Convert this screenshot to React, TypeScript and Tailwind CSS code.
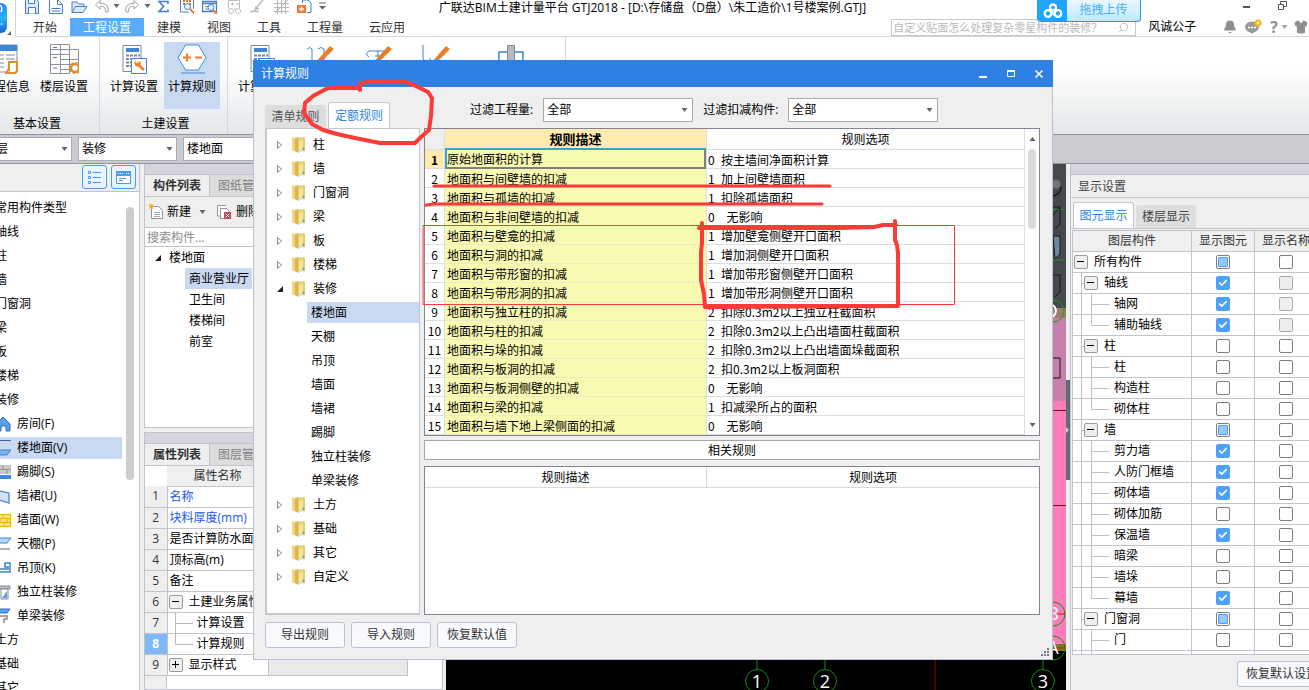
import React from 'react';
import { Bell, Check, Search, Shirt } from 'lucide-react';

const tabs = ['开始', '工程设置', '建模', '视图', '工具', '工程量', '云应用'];

const componentTypes = ['常用构件类型', '轴线', '柱', '墙', '门窗洞', '梁', '板', '楼梯', '装修'];

const finishes = [
  { name: '房间(F)', icon: 'room' },
  { name: '楼地面(V)', icon: 'floor' },
  { name: '踢脚(S)', icon: 'skirting' },
  { name: '墙裙(U)', icon: 'dado' },
  { name: '墙面(W)', icon: 'wall' },
  { name: '天棚(P)', icon: 'ceiling' },
  { name: '吊顶(K)', icon: 'suspended' },
  { name: '独立柱装修', icon: 'column' },
  { name: '单梁装修', icon: 'beam' },
];

const rules: [string, string, string][] = [
  ['原始地面积的计算', '0', '按主墙间净面积计算'],
  ['地面积与间壁墙的扣减', '1', '加上间壁墙面积'],
  ['地面积与孤墙的扣减', '1', '扣除孤墙面积'],
  ['地面积与非间壁墙的扣减', '0', '  无影响'],
  ['地面积与壁龛的扣减', '1', '增加壁龛侧壁开口面积'],
  ['地面积与洞的扣减', '1', '增加洞侧壁开口面积'],
  ['地面积与带形窗的扣减', '1', '增加带形窗侧壁开口面积'],
  ['地面积与带形洞的扣减', '1', '增加带形洞侧壁开口面积'],
  ['地面积与独立柱的扣减', '2', '扣除0.3m2以上独立柱截面积'],
  ['地面积与柱的扣减', '2', '扣除0.3m2以上凸出墙面柱截面积'],
  ['地面积与垛的扣减', '2', '扣除0.3m2以上凸出墙面垛截面积'],
  ['地面积与板洞的扣减', '2', '扣0.3m2以上板洞面积'],
  ['地面积与板洞侧壁的扣减', '0', '  无影响'],
  ['地面积与梁的扣减', '1', '扣减梁所占的面积'],
  ['地面积与墙下地上梁侧面的扣减', '0', '  无影响'],
];

const ruleTree = ['柱', '墙', '门窗洞', '梁', '板', '楼梯', '装修'];
const ruleChildren = ['楼地面', '天棚', '吊顶', '墙面', '墙裙', '踢脚', '独立柱装修', '单梁装修'];
const ruleTreeEnd = ['土方', '基础', '其它', '自定义'];

type CheckState = 'on' | 'off' | 'some' | 'disabled';

interface Layer {
  name: string;
  level: 0 | 1 | 2;
  show: CheckState;
  label: CheckState;
  last?: boolean;
}

const layers: Layer[] = [
  { name: '所有构件', level: 0, show: 'some', label: 'off' },
  { name: '轴线', level: 1, show: 'on', label: 'disabled' },
  { name: '轴网', level: 2, show: 'on', label: 'disabled' },
  { name: '辅助轴线', level: 2, show: 'on', label: 'disabled', last: true },
  { name: '柱', level: 1, show: 'off', label: 'off' },
  { name: '柱', level: 2, show: 'off', label: 'off' },
  { name: '构造柱', level: 2, show: 'off', label: 'off' },
  { name: '砌体柱', level: 2, show: 'off', label: 'off', last: true },
  { name: '墙', level: 1, show: 'some', label: 'off' },
  { name: '剪力墙', level: 2, show: 'on', label: 'off' },
  { name: '人防门框墙', level: 2, show: 'on', label: 'off' },
  { name: '砌体墙', level: 2, show: 'on', label: 'off' },
  { name: '砌体加筋', level: 2, show: 'off', label: 'off' },
  { name: '保温墙', level: 2, show: 'on', label: 'off' },
  { name: '暗梁', level: 2, show: 'off', label: 'off' },
  { name: '墙垛', level: 2, show: 'off', label: 'off' },
  { name: '幕墙', level: 2, show: 'on', label: 'off', last: true },
  { name: '门窗洞', level: 1, show: 'some', label: 'off' },
  { name: '门', level: 2, show: 'off', label: 'off' },
];

const Caret = ({ className = '' }: { className?: string }) => (
  <svg className={`pointer-events-none ${className}`} width="7" height="4" viewBox="0 0 7 4">
    <path d="M0.5 0h6L3.5 4z" fill="#5f666f" />
  </svg>
);

const TreeArrow = ({ open }: { open?: boolean }) => (
  <svg width="8" height="10" viewBox="0 0 8 10">
    {open ? <path d="M7 2v6H1z" fill="#222" /> : <path d="M1.500 1.500v7l4-3.500z" fill="#fff" stroke="#8a8a8a" />}
  </svg>
);

const FolderIcon = () => (
  <svg width="14" height="16" viewBox="0 0 14 16">
    <path d="M0 1l6-1v15l-5-1-1-1z" fill="#ecd684" />
    <path d="M3 1.500L7 0v16l-4-2z" fill="#d9b650" />
    <path d="M6 1l6-1 1 1v13l-7 1z" fill="#e8cc6b" />
    <path d="M7 4l4-2v11l-4 2z" fill="#f4e29b" />
    <path d="M11.500 10.500v3" stroke="#4ea3e0" strokeWidth="1.500" />
  </svg>
);

// Toolbar drawings on a 16px grid
const quickIcons: Record<string, React.ReactNode> = {
  save: <><path d="M1.500.5h11l2 2v12h-13z" fill="#d9e9fa" stroke="#4a7fbf" /><path d="M4.500.5h6v4h-6zM4.500 14.500v-6h7v6" fill="#fff" stroke="#4a7fbf" /></>,
  doc: <><path d="M1.500.5h8l5 5v9h-13z" fill="#fff" stroke="#4a7fbf" /><path d="M9.500.5v5h5M3.500 9.500h9M3.500 12h9" fill="none" stroke="#4a7fbf" /></>,
  open: <path d="M1 13.500V3h5l1.500 2H13v2.500M1 13.500L4.500 7.500H16l-4 6z" fill="#d9e9fa" stroke="#4a7fbf" />,
  undo: <path d="M6 1.500L1.500 6 6 10V7.500c4-.5 5.500 1 5.500 5.500h2.500c1-5-1.500-9-8-8.500z" fill="#fff" stroke="#9a9fa5" />,
  redo: <path d="M10 1.500L14.500 6 10 10V7.500c-4-.5-5.500 1-5.500 5.500H2c-1-5 1.500-9 8-8.500z" fill="#fff" stroke="#9a9fa5" />,
  sum: <path d="M13 5V2.500H4L8.500 7.500 4 12.500h9v-2" fill="none" stroke="#3c7fcc" strokeWidth="1.500" />,
  calc: <><path d="M1.500 0v13h8M14.500 0v10" fill="none" stroke="#4a7fbf" /><path d="M4 2h9M4 5h9" stroke="#cf6d2b" strokeWidth="2" strokeDasharray="2 1" /><circle cx="8.500" cy="7.500" r="3" fill="#eaf3fd" stroke="#3c7fcc" /><path d="M11 10l4 4" stroke="#ed7d31" strokeWidth="2" /></>,
  find: <><path d="M.5 2.500h14v10H.5zM.5 4.500h14" fill="#fff" stroke="#4a7fbf" strokeWidth="1.300" /><path d="M3 7.500h3M3 10h3" stroke="#888" /><circle cx="9" cy="8.500" r="3" fill="#eaf3fd" stroke="#3c7fcc" /><path d="M11 11l4 4" stroke="#ed7d31" strokeWidth="2" /></>,
  link: <><path d="M2.500 9.500v-8h11v8" fill="none" stroke="#bdbdbd" /><path d="M5 5h3M10 5h3M6.500 3.500v3M8 10h2" stroke="#bdbdbd" /><circle cx="5" cy="12" r="2.500" fill="none" stroke="#bdbdbd" /><circle cx="12" cy="12" r="2.500" fill="none" stroke="#bdbdbd" /></>,
  brush: <path d="M1 12.500h9M14 1l-6 7M6 11l1-3 2 1.500z" fill="none" stroke="#bdbdbd" strokeWidth="1.500" />,
  grid: <path d="M1 4.500h15M1 8.500h15M1 12.500h15M4.500 1v14M8.500 1v14M12.500 1v14M2 14L15 1" fill="none" stroke="#b5b5b5" />,
  add: <><path d="M6.500 0v4M7 1h5l3 3v9.500h-4" fill="none" stroke="#4a7fbf" /><path d="M1 6h9v8H1z" fill="#ed7d31" /><path d="M3 10h5M5.500 7.500v5" stroke="#fff" strokeWidth="1.300" /></>,
};

const QuickButton = ({ name, wide }: { name: string; wide?: boolean }) => (
  <button className={`${wide ? 'w-6' : 'w-[23px]'} h-[14px] flex justify-center overflow-hidden shrink-0`} aria-label={name}>
    <svg width="16" height="15" viewBox="0 1 16 15">{quickIcons[name]}</svg>
  </button>
);

const CalcBody = () => (
  <>
    <path d="M4 1.500h18v26H4z" fill="#fff" stroke="#7f8b96" />
    <path d="M7 4h13v4H7z" fill="#3d85d8" />
    <path d="M7 11.500h14M7 15h14M7 18.500h14M7 22h14" stroke="#7b8792" strokeWidth="2" strokeDasharray="3 1" />
  </>
);

const Pencil = () => (
  <path d="M10 19L25 2l4 3L15 19z" fill="#ed7d23" />
);

const ribbonIcons: Record<string, React.ReactNode> = {
  info: <><path d="M1 1h25v27H1z" fill="#fff" stroke="#7f8b96" /><path d="M1 1h25v6H1z" fill="#3d85d8" /><path d="M5 11h8M15 11h9M5 15h8M15 15h9M5 19h8M5 23h8" stroke="#7f8b96" /><path d="M18 18h8v8c0 2-1 3-3 3h-9c2 0 3-1 3-3h1z" fill="#fff" stroke="#dd8d2c" strokeWidth="2" /></>,
  floors: <><path d="M1.500.5h19v29h-19zM20.500 5.500h9v15h-9z" fill="#fff" stroke="#8b929a" /><path d="M1.500 10.500h19M1.500 20.500h19M11.500.5v29M1.500 5.500h28M11.500 15.500h18M11.500 25.500h9" fill="none" stroke="#8b929a" /><path d="M4 3.500h4M4 13.500h4M4 24h4" stroke="#777" /><circle cx="26" cy="24" r="4" fill="#fff" stroke="#dd8d2c" strokeWidth="2.500" /><circle cx="26" cy="24" r="5.500" fill="none" stroke="#dd8d2c" strokeWidth="1.500" strokeDasharray="2 2.300" /></>,
  settings: <><CalcBody /><path d="M12.500 14.500h15v15h-15z" fill="#fff" stroke="#3d85d8" /><path d="M18 19.500l7 6.500" stroke="#ed7d31" strokeWidth="2.500" /><path d="M16 18l1.500 3.500 3-1v-3" fill="none" stroke="#ed7d31" strokeWidth="2" /></>,
  rules: <><path d="M8.500 1h13L29 13.500 21.500 26h-13L1 13.500z" fill="#fff" stroke="#3d8fe0" /><path d="M6 13.500h8M10 9.500v8M18 13.500h7" stroke="#f07c2a" strokeWidth="2" /><path d="M4 29h24" stroke="#3d85d8" /></>,
  hooks: <><path d="M2 5q3-3 5 0v13M13 5q3-3 6 0v14" fill="none" stroke="#3d85d8" /><Pencil /></>,
  bend: <><path d="M24 7H6q-5 3 0 6M15 7v10M12 12h9" fill="none" stroke="#3d85d8" /><Pencil /></>,
  hook: <><path d="M2 1v14l5 4M9 14v5" fill="none" stroke="#3d85d8" /><Pencil /></>,
  pillar: <><path d="M4 16V8h24v8" fill="none" stroke="#3d85d8" strokeWidth="1.500" /><path d="M12.500 1.500h7v18h-7z" fill="#b5bac0" stroke="#7f8b96" /></>,
};

const RibbonButton = ({ icon, label, active }: { icon: string; label: string; active?: boolean }) => (
  <button className={`w-14 h-[67px] shrink-0 flex flex-col items-center pt-[2px] gap-[5px] ${active ? 'bg-[#c9d9f2]' : ''}`}>
    <svg width="30" height="30" viewBox="0 0 30 30">{ribbonIcons[icon]}</svg>
    <span className="leading-4 whitespace-nowrap">{label}</span>
  </button>
);

const finishIcons: Record<string, React.ReactNode> = {
  room: <path d="M8 1l7 7v7h-4v-5H6v5H1V8z" fill="#5a9ee6" stroke="#2f6fb5" />,
  floor: <><path d="M0 .5h16" stroke="#3b64a5" /><path d="M0 10h16l-4 5H0z" fill="#78b2ee" stroke="#3c84d0" /></>,
  skirting: <><path d="M0 1h16v9H0z" fill="#c9c9c9" /><path d="M0 5.500h16M8 1v4M12 6v4" stroke="#8f8f8f" /><path d="M0 11h16v4H0z" fill="#3b8ae0" /></>,
  dado: <path d="M1 2l13 3v10L1 11z" fill="#cfe2f8" stroke="#5f94cf" strokeWidth="1.500" />,
  wall: <><path d="M0 2h16v13H0z" fill="#ffe08a" /><path d="M0 2.500h16M0 6.500h16M0 10.500h16M0 14.500h16M8 2v4M12 6v5M5 6v5M9 11v4M15.500 2v13" stroke="#f5ad0c" /></>,
  ceiling: <><path d="M0 2h16l-4 5H0z" fill="#b9d8f8" stroke="#3c84d0" /><path d="M0 13h15" stroke="#9a9a9a" strokeWidth="1.500" /></>,
  suspended: <path d="M0 12h15V3h-5v4h3v2H4" fill="none" stroke="#3c84d0" strokeWidth="1.500" />,
  column: <><path d="M3 2h12v3H3z" fill="#b9bdc2" stroke="#858a90" /><path d="M6 5h7v10H6z" fill="#fff" stroke="#858a90" /><path d="M7 14l5-7v7z" fill="#5a9ee6" /></>,
  beam: <><path d="M1 1h14l-3 4H1z" fill="#5a9ee6" stroke="#2f6fb5" /><path d="M3 8h9v3h-3v4" fill="none" stroke="#858a90" strokeWidth="1.500" /></>,
};

const ExpandBox = ({ plus }: { plus?: boolean }) => (
  <button className="w-[14px] h-[14px] shrink-0 bg-[#efefef] border border-[#9a9a9a] rounded-[2px] flex items-center justify-center" aria-expanded={!plus}>
    <svg width="8" height="8" viewBox="0 0 8 8">
      <path d={plus ? 'M0 3.500h7M3.500 0v7' : 'M0 3.500h7'} stroke="#000" />
    </svg>
  </button>
);

const CheckCell = ({ state, label }: { state: CheckState; label: string }) => (
  <label className="relative flex w-[14px] h-[14px] mx-auto items-center justify-center">
    <input
      type="checkbox"
      aria-label={label}
      defaultChecked={state === 'on'}
      disabled={state === 'disabled'}
      className="peer absolute inset-0 appearance-none rounded-[2px] border border-[#7d7d7d] bg-white checked:bg-[#4fa0f9] checked:border-[#4fa0f9] disabled:bg-[#eeeeee] disabled:border-[#ababab]"
    />
    <Check size={10} strokeWidth={4} className="relative text-white pointer-events-none invisible peer-checked:visible" />
    {state === 'some' && <span className="absolute inset-[2px] bg-[#96c8f8] border border-[#4b9cf5] rounded-[1px] pointer-events-none" />}
  </label>
);

const FilterSelect = ({ id, label }: { id: string; label: string }) => (
  <div className="flex items-center gap-[10px]">
    <label htmlFor={id} className="whitespace-nowrap">{label}</label>
    <div className="relative">
      <select id={id} className="appearance-none w-[150px] h-6 bg-white border border-[#ababab] pl-[3px] leading-4">
        <option>全部</option>
      </select>
      <Caret className="absolute right-[5px] top-[10px]" />
    </div>
  </div>
);

const BarSelect = ({ value, className }: { value: string; className: string }) => (
  <div className={`relative shrink-0 ${className}`}>
    <select aria-label={value} className="appearance-none w-full h-6 bg-white border border-[#a9adb5] pl-[3px] leading-4">
      <option>{value}</option>
    </select>
    <Caret className="absolute right-1 top-[10px]" />
  </div>
);

const Header = () => (
  <header className="relative flex h-[37px] shrink-0 bg-white">
    <div className="w-4 shrink-0 relative overflow-hidden">
      <svg width="16" height="37" viewBox="0 0 16 37">
        <defs>
          <linearGradient id="logo" x1="0" y1="0" x2="0" y2="1">
            <stop offset="0" stopColor="#1d8cf0" /><stop offset="0.500" stopColor="#29b3fb" /><stop offset="1" stopColor="#1565d0" />
          </linearGradient>
        </defs>
        <rect x="-22" y="3" width="29" height="30" rx="6" fill="url(#logo)" />
        <path d="M0 5q3 2 1 7" fill="none" stroke="#fff" strokeWidth="1.500" />
        <circle cx="1.500" cy="24" r="1" fill="#bfe4ff" />
        <path d="M11 31v4H7z" fill="#666" />
        <path d="M15.500 0v36" stroke="#d3d3d3" />
      </svg>
    </div>
    <div className="flex-1 min-w-0 border-b border-[#d4d4d4] pl-1">
      <div className="h-[18px] flex items-start">
        <QuickButton name="save" wide />
        <QuickButton name="doc" />
        <QuickButton name="open" />
        <QuickButton name="undo" />
        <Caret className="mt-1 shrink-0" />
        <QuickButton name="redo" wide />
        <Caret className="mt-1 shrink-0" />
        <QuickButton name="sum" wide />
        <QuickButton name="calc" />
        <QuickButton name="find" wide />
        <QuickButton name="link" />
        <QuickButton name="brush" wide />
        <QuickButton name="grid" />
        <QuickButton name="add" />
        <svg width="7" height="8" viewBox="0 0 7 8" className="mt-[2px] ml-1 shrink-0"><path d="M0 1h7" stroke="#5f666f" /><path d="M0 4h7L3.500 7.500z" fill="#5f666f" /></svg>
        <h1 className="flex-1 text-center leading-4 whitespace-nowrap pr-[264px]">广联达BIM土建计量平台 GTJ2018 - [D:\存储盘（D盘）\朱工造价\1号楼案例.GTJ]</h1>
        <button aria-label="最小化" className="pt-[6px] mr-7"><svg width="7" height="2"><path d="M0 1h7" stroke="#555" strokeWidth="2" /></svg></button>
        <button aria-label="还原" className="pt-[1px] mr-[22px]"><svg width="9" height="10" viewBox="0 0 9 10" fill="none" stroke="#555"><path d="M2.500 3V.5h6v5H6M.5 3.500h5v5h-5z" /></svg></button>
      </div>
      <nav className="h-[18px] flex">
        {tabs.map(tab => (
          <a key={tab} href="#" className={`px-[13px] leading-[19px] whitespace-nowrap ${tab === '工程设置' ? 'bg-[#5aaafa] text-white' : 'text-[#333]'}`}>{tab}</a>
        ))}
        <div className="ml-auto flex items-center">
          <div className="relative w-[245px] mr-3">
            <input placeholder="自定义贴面怎么处理复杂零星构件的装修？" aria-label="搜索" className="w-full h-[17px] block border border-[#c8c8c8] px-px text-[11px] placeholder:text-[#b9b9b9] bg-white" />
            <Search size={11} className="absolute right-[7px] top-[3px] text-[#bbb] -scale-x-100" />
          </div>
          <span className="w-[75px] leading-4">风诚公子</span>
          <Bell size={14} fill="#8f8f8f" className="text-[#8f8f8f] mr-[7px]" />
          <svg width="20" height="16" viewBox="0 0 20 16" className="mr-[6px]">
            <ellipse cx="8" cy="8" rx="7" ry="5.500" fill="#9a9c9a" /><path d="M5 12l3 3 3-3z" fill="#9a9c9a" />
            <path d="M4 8.500h2M7 8.500h2M10 8.500h2" stroke="#fff" strokeWidth="1.500" />
            <circle cx="14" cy="4" r="3.500" fill="#fbb612" /><circle cx="14" cy="4" r="1" fill="none" stroke="#fff" />
          </svg>
          <span className="text-base font-bold leading-4 text-[#8f8f8f]">?</span>
          <Caret className="ml-[3px] mr-[6px] opacity-60" />
          <Shirt size={14} fill="#8f8f8f" className="text-[#8f8f8f] mr-px" />
        </div>
      </nav>
    </div>
    {/* upload badge floats over the search box */}
    <button className="absolute top-0 right-[168px] h-[22px] w-[104px] flex rounded-b border border-t-0 border-[#2297f3] bg-gradient-to-b from-[#eaf8ff] to-[#bfe9fe] overflow-hidden">
      <span className="w-[29px] h-full bg-[#22a4fd] flex items-center justify-center shrink-0">
        <svg width="20" height="16" viewBox="0 0 20 16" fill="none" stroke="#fff" strokeWidth="2.300">
          <circle cx="10" cy="4.500" r="3" /><circle cx="5" cy="10.500" r="3.300" /><circle cx="15" cy="10.500" r="3.300" /><path d="M7.500 8.500l5 4" />
        </svg>
      </span>
      <span className="flex-1 text-center text-[#45aefa] leading-5">拖拽上传</span>
    </button>
  </header>
);

const Ribbon = () => (
  <div className="h-[98px] shrink-0 overflow-hidden flex bg-gradient-to-b from-white from-30% to-[#e3e7e9] border-b border-[#8f949e] text-black">
    <div className="-ml-[22px] pt-[5px] w-[122px] shrink-0 border-r border-[#d5d8da]">
      <div className="flex gap-[2px]">
        <RibbonButton icon="info" label="工程信息" />
        <RibbonButton icon="floors" label="楼层设置" />
      </div>
      <p className="text-center leading-4 mt-[7px] pr-[3px]">基本设置</p>
    </div>
    <div className="pt-[5px] w-32 shrink-0 border-r border-[#d5d8da]">
      <div className="flex gap-[2px] pl-[6px]">
        <RibbonButton icon="settings" label="计算设置" />
        <RibbonButton icon="rules" label="计算规则" active />
      </div>
      <p className="text-center leading-4 mt-[7px] pl-1">土建设置</p>
    </div>
    <div className="pt-[5px] w-[338px] shrink-0 border-r border-[#d5d8da] flex gap-[2px] pl-[6px]">
      <RibbonButton icon="settings" label="计算设置" />
      <RibbonButton icon="hooks" label="" />
      <RibbonButton icon="bend" label="" />
      <RibbonButton icon="hook" label="" />
      <div className="ml-4"><RibbonButton icon="pillar" label="" /></div>
    </div>
  </div>
);

const TypePanel = () => (
  <aside className="w-[140px] shrink-0 flex flex-col overflow-hidden bg-white border-r border-[#c1c4ca]">
    <div className="h-7 shrink-0 bg-[#efefef] border-b border-[#c1c4ca] flex justify-end gap-1 pt-px pr-[3px]">
      <button aria-label="列表" className="w-[25px] h-6 rounded-[3px] border border-[#4b9cf0] bg-[#e8f4fe] flex items-center justify-center">
        <svg width="13" height="14" viewBox="0 0 13 14" fill="none" stroke="#4b9cf0"><path d="M.5 1.500h2v2h-2zM.5 6.500h2v2h-2zM.5 11.500h2v2h-2zM4.500 2.500H13M4.500 7.500H13M4.500 12.500H13" /></svg>
      </button>
      <button aria-label="面板" className="w-[25px] h-6 rounded-[3px] border border-[#4b9cf0] bg-[#e8f4fe] flex items-center justify-center">
        <svg width="15" height="13" viewBox="0 0 15 13"><path d="M.5.500h14v12H.5z" fill="#fff" stroke="#4b9cf0" /><path d="M0 0h15v5H0z" fill="#4b9cf0" /><path d="M2 2.500h6M10 2.500h3" stroke="#fff" strokeDasharray="1 1" /><path d="M3 7.500h7M3 9.500h4" stroke="#4b9cf0" /></svg>
      </button>
    </div>
    <div className="flex flex-1 min-h-0">
      <ul className="-ml-[5px] w-[127px] pt-1 shrink-0">
        {componentTypes.map(name => <li key={name} className="h-6 leading-6">{name}</li>)}
        {finishes.map(item => (
          <li key={item.name} className="h-6 py-px">
            <div className={`h-[22px] flex items-center gap-[6px] ${item.icon === 'floor' ? 'bg-[#c9d9f2]' : ''}`}>
              <svg width="16" height="16" viewBox="0 0 16 16">{finishIcons[item.icon]}</svg>
              {item.name}
            </div>
          </li>
        ))}
        {['土方', '基础', '其它'].map(name => <li key={name} className="h-6 leading-6">{name}</li>)}
      </ul>
      <div className="ml-1 mt-[15px] w-2 h-[273px] rounded-full bg-[#cdcdcd]" />
    </div>
  </aside>
);

const PanelTabs = ({ active, other }: { active: string; other: string }) => (
  <>
    <div className="h-[11px] bg-[#d6d5dd] border-b border-[#c1c4ca]" />
    <div className="h-[22px] flex border-b border-[#c1c4ca] leading-[22px]">
      <button className="w-[65px] bg-[#efefef] border-r border-[#c1c4ca] font-bold text-[#333]">{active}</button>
      <button className="flex-1 bg-[#dcdcdc] text-left pl-2 text-[#808080]">{other}</button>
    </div>
  </>
);

const props: { name: string; kind?: 'blue' | 'open' | 'closed' | 'child' | 'end' }[] = [
  { name: '名称', kind: 'blue' },
  { name: '块料厚度(mm)', kind: 'blue' },
  { name: '是否计算防水面积' },
  { name: '顶标高(m)' },
  { name: '备注' },
  { name: '土建业务属性', kind: 'open' },
  { name: '计算设置', kind: 'child' },
  { name: '计算规则', kind: 'end' },
  { name: '显示样式', kind: 'closed' },
];

const ComponentPanel = () => (
  <div className="w-[299px] ml-1 shrink-0 flex flex-col">
    <section className="h-[264px] shrink-0 bg-white border border-t-0 border-[#c1c4ca]">
      <PanelTabs active="构件列表" other="图纸管理" />
      <div className="h-[31px] bg-[#efefef] border-b border-[#c1c4ca] flex items-center pl-1">
        <svg width="15" height="16" viewBox="0 0 15 16"><path d="M2.500 2.500h7l4 4v8h-11z" fill="#fff" stroke="#8c959e" /><path d="M5 8.500h6M5 10.500h6M5 12.500h6" stroke="#a5abb2" /><path d="M0 0l5 5M5 0L0 5M2.500 0v5M0 2.500h5" stroke="#f5a623" /></svg>
        <button className="ml-[3px]">新建</button>
        <Caret className="ml-2" />
        <svg className="ml-[11px]" width="15" height="16" viewBox="0 0 15 16"><path d="M3 12H.5V1.500H9M3.500 14.500v-10h6l4 4v6z" fill="#fff" stroke="#8c959e" /><path d="M7 8h7v7H7z" fill="#c9404e" /><path d="M8.500 9.500l4 4M12.500 9.500l-4 4" stroke="#fff" /></svg>
        <button className="ml-1">删除</button>
      </div>
      <input placeholder="搜索构件..." aria-label="搜索构件" className="block w-full h-[19px] px-[2px] border-b border-[#c1c4ca] placeholder:text-[#8b8b8b]" />
      <ul className="leading-[21px]">
        <li className="flex items-center pl-[9px] gap-[7px]"><TreeArrow open />楼地面</li>
        {['商业营业厅', '卫生间', '楼梯间', '前室'].map(name => (
          <li key={name} className="pl-10">
            <span className={`block w-[67px] pl-1 whitespace-nowrap ${name === '商业营业厅' ? 'bg-[#c9d9f2]' : ''}`}>{name}</span>
          </li>
        ))}
      </ul>
    </section>
    <section className="mt-1 flex-1 min-h-0 overflow-hidden bg-white border border-[#c1c4ca] flex flex-col">
      <PanelTabs active="属性列表" other="图层管理" />
      <table className="table-fixed w-[263px] shrink-0 border-collapse">
        <colgroup><col className="w-[22px]" /><col className="w-[101px]" /><col /></colgroup>
        <thead>
          <tr className="h-5 bg-[#efefef] text-[#333]">
            <th className="bg-white" />
            <th className="font-normal leading-4 border-b border-[#c1c4ca]">属性名称</th>
            <th className="font-normal leading-4 border-b border-[#c1c4ca]">属性值</th>
          </tr>
        </thead>
        <tbody>
          {props.map((p, i) => (
            <tr key={p.name} className="h-[21px]">
              <td className={`p-0 text-center leading-5 border-b border-r border-[#c1c4ca] ${i === 7 ? 'bg-[#7fb9fa] text-white font-bold' : 'bg-[#efefef] text-[#333]'}`}>{i + 1}</td>
              <td className={`p-0 leading-5 whitespace-nowrap overflow-hidden border-b border-r border-[#c1c4ca] ${p.kind === 'blue' ? 'text-[#2257f5]' : ''}`}>
                <div className="flex items-center h-5 pl-px">
                  {(p.kind === 'open' || p.kind === 'closed') && <ExpandBox plus={p.kind === 'closed'} />}
                  {(p.kind === 'child' || p.kind === 'end') && (
                    <svg width="24" height="20" viewBox="0 0 24 20"><path d={p.kind === 'end' ? 'M6.500 0v10.500H24' : 'M6.500 0v20M6.500 10.500H24'} fill="none" stroke="#b5b8bd" /></svg>
                  )}
                  <span className={p.kind === 'open' || p.kind === 'closed' ? 'pl-[6px]' : p.kind === 'child' || p.kind === 'end' ? 'pl-1' : 'pl-px'}>{p.name}</span>
                </div>
              </td>
              <td className="p-0 bg-[#e9e9e9] border-b border-r border-[#c1c4ca]" />
            </tr>
          ))}
        </tbody>
      </table>
      <div className="flex-1 w-[22px] bg-[#efefef] border-r border-[#c1c4ca]" />
    </section>
  </div>
);

const Viewport = () => (
  <main className="relative flex-1 min-w-0 ml-[3px] bg-black overflow-hidden">
    <svg className="absolute inset-0" width="620" height="526" viewBox="446 164 620 526" fontFamily="'Open Sans', sans-serif" fontSize="18">
      <path d="M935 640v50M1040 505h26" stroke="#a00000" />
      <path d="M1050 164h16v154h-16z" fill="#45494d" />
      <path d="M1050 308h16v10h-16z" fill="#9a7d66" />
      <path d="M1050 318h16v83h-16z" fill="#c77fab" />
      <path d="M1050 401h16v243h-16z" fill="#fb7cb9" />
      <path d="M1050 644h16v7h-16z" fill="#787428" />
      <path d="M1050 410.500h16M1050 505.500h16" stroke="#7a0c28" />
      <path d="M1053 209.500h12M1053 260h12" stroke="#2b8a2b" />
      <path d="M1053 207h7v17l-5 5M1060 207l-7 8M1053 275h7v17l-5 5M1053 358h7v20h-7" fill="none" stroke="#15171a" />
      <path d="M1053 236h7v18l-5 5z" fill="#6f8799" stroke="#15171a" />
      <circle cx="1056" cy="184" r="4.500" fill="#70757a" />
      <path d="M1061 187q0 7-8 9" fill="none" stroke="#15171a" strokeWidth="1.500" />
      <circle cx="1053" cy="311" r="11" fill="none" stroke="#1c9a1c" />
      <path d="M1053 305q6 5 0 12" fill="none" stroke="#fff" strokeWidth="2" />
      <path d="M1053 614h12M1053 648h12" stroke="#e01010" />
      <g fill="none" stroke="#0f8f0f">
        <circle cx="1053" cy="614" r="12" /><circle cx="1053" cy="648" r="12" />
        <circle cx="757" cy="681" r="11.500" /><circle cx="825" cy="681" r="11.500" /><circle cx="1043" cy="681" r="11.500" />
        <path d="M757 650v19M825 650v19M1043 650v19" />
      </g>
      <g fill="#fff" textAnchor="middle">
        <text x="1053" y="620">B</text><text x="1053" y="654">A</text>
        <text x="757" y="688">1</text><text x="825" y="688">2</text><text x="1043" y="688">3</text>
      </g>
    </svg>
  </main>
);

const LayerPanel = () => (
  <aside className="w-[239px] shrink-0 overflow-hidden bg-[#efefef] border-l border-[#c1c4ca]">
    <div className="w-[252px] h-full flex flex-col">
      <div className="h-[11px] shrink-0 bg-[#d6d5dd] border-b border-[#c1c4ca]" />
      <h2 className="h-[23px] shrink-0 leading-6 pl-[7px] border-b border-[#c1c4ca] text-[#444]">显示设置</h2>
      <div className="h-[30px] shrink-0 flex items-end pl-[2px] gap-[2px]">
        <button className="w-[61px] h-[26px] bg-white border border-b-0 border-[#c1c4ca] rounded-t-[3px] text-[#2e84e6]">图元显示</button>
        <button className="w-[60px] h-[23px] bg-[#dedede] rounded-t-[3px] text-[#444]">楼层显示</button>
      </div>
      <div className="flex-1 border-t border-[#c1c4ca] pt-px pl-px min-h-0">
        <div className="h-[425px] overflow-hidden border-b border-[#c1c4ca]">
          <table className="table-fixed w-[245px] border-collapse bg-white">
            <colgroup><col className="w-[119px]" /><col className="w-[63px]" /><col className="w-[63px]" /></colgroup>
            <thead>
              <tr className="h-[21px] bg-[#efefef] text-[#333]">
                {['图层构件', '显示图元', '显示名称'].map(h => <th key={h} className="p-0 font-normal leading-5 whitespace-nowrap border border-[#c1c4ca]">{h}</th>)}
              </tr>
            </thead>
            <tbody>
              {[...layers, { name: '', level: 2, show: 'off', label: 'off' } as Layer].map((row, i) => (
                <tr key={i} className="h-[21px]">
                  <td className="p-0 border border-[#c1c4ca]">
                    <div className="flex items-center h-5">
                      {row.level === 0 && <span className="w-px shrink-0" />}
                      {row.level > 0 && (
                        <svg width={row.level === 1 ? 11 : 38} height="20" viewBox={row.level === 1 ? '0 0 11 20' : '0 0 38 20'} fill="none" stroke="#bcbfc4" className="shrink-0">
                          <path d={row.level === 1 ? 'M8.500 0v20M8.500 10.500H11' : row.last ? 'M8.500 0v20M18.500 0v10.500H36' : 'M8.500 0v20M18.500 0v20M18.500 10.500H36'} />
                        </svg>
                      )}
                      {row.level < 2 && <ExpandBox />}
                      <span className={`leading-5 whitespace-nowrap ${row.level === 2 ? 'pl-[3px]' : 'pl-[6px]'}`}>{row.name}</span>
                    </div>
                  </td>
                  <td className="p-0 border border-[#c1c4ca]"><CheckCell state={row.show} label={`显示图元 ${row.name}`} /></td>
                  <td className="p-0 border border-[#c1c4ca]"><CheckCell state={row.label} label={`显示名称 ${row.name}`} /></td>
                </tr>
              ))}
            </tbody>
          </table>
        </div>
        <button className="ml-[165px] mt-[6px] w-24 h-[26px] bg-[#f7f8fb] border border-[#b9c0d0] rounded-[3px] text-[#333] text-left pl-2 whitespace-nowrap">恢复默认设置</button>
      </div>
    </div>
  </aside>
);

const RuleTreeItem = ({ name, open }: { name: string; open?: boolean }) => (
  <li className="h-6 flex items-center pl-[9px]">
    <TreeArrow open={open} />
    <span className="ml-2 mr-[7px]"><FolderIcon /></span>
    {name}
  </li>
);

// Red pen marks drawn over the rule grid
const PenMarks = () => (
  <svg className="absolute -left-px top-0 pointer-events-none" width="800" height="600" viewBox="253 60 800 600" fill="none" stroke="#fb3b38" strokeLinecap="round" strokeLinejoin="round">
    <path d="M360 90V88H328L313 96L305 103L304 113L312 124L323 130L337 134L355 138L380 143H415L421 137L429 130L431 116L432 98L428 92L418 87L406 82H366L360 84V87" strokeWidth="4" />
    <path d="M434 186h396M426 205l8-1h388" strokeWidth="3" />
    <path d="M423.500 225.500h531v79h-531z" />
    <path d="M699 228h140l35-1 9-2h13M702 223v20l-1 9v28l3 14 1 13M705 307l193-1M895 221v19l2 5 1 8v53" strokeWidth="4" />
  </svg>
);

const RulesDialog = () => (
  <div role="dialog" aria-labelledby="dialog-title" className="absolute left-[253px] top-[60px] w-[800px] h-[600px] flex flex-col bg-[#efefef] border border-t-0 border-[#b7bfd3]">
    <div className="-mx-px h-[27px] shrink-0 bg-[#2e80e2] text-white flex items-center pl-2 pr-[10px]">
      <h2 id="dialog-title" className="flex-1 leading-[27px]">计算规则</h2>
      <button aria-label="最小化" className="w-7"><svg width="8" height="9"><path d="M0 8h8" stroke="#fff" strokeWidth="2" /></svg></button>
      <button aria-label="最大化" className="w-7"><svg width="8" height="7"><path d="M.5 1h7v5.500h-7z" fill="none" stroke="#fff" /><path d="M0 1h8" stroke="#fff" strokeWidth="2" /></svg></button>
      <button aria-label="关闭"><svg width="8" height="8"><path d="M0.500.5l7 7M7.500.5l-7 7" stroke="#fff" strokeWidth="1.500" /></svg></button>
    </div>
    <div className="flex flex-1 min-h-0 pl-[11px] pr-3 gap-1">
      <div className="w-[155px] shrink-0 flex flex-col">
        <div className="h-[41px] shrink-0 flex items-end gap-[2px]">
          <button className="w-[61px] h-[23px] bg-[#dedede] rounded-t-[3px] text-[#555]">清单规则</button>
          <button className="w-[62px] h-[26px] bg-white border border-b-0 border-[#c1c4ca] rounded-t-[3px] text-[#2e84e6]">定额规则</button>
        </div>
        <ul className="flex-1 min-h-0 bg-white border border-l-2 border-b-2 border-[#c3c7ce] pt-1">
          {ruleTree.map(name => <RuleTreeItem key={name} name={name} open={name === '装修'} />)}
          {ruleChildren.map(name => (
            <li key={name} className="h-6 pl-10 py-px">
              <span className={`block h-[21px] leading-[21px] pl-1 ${name === '楼地面' ? 'bg-[#c9d9f2]' : ''}`}>{name}</span>
            </li>
          ))}
          {ruleTreeEnd.map(name => <RuleTreeItem key={name} name={name} />)}
        </ul>
      </div>
      <div className="flex-1 min-w-0 flex flex-col">
        <div className="h-[41px] shrink-0 flex items-center pl-[46px] pt-1 gap-[10px]">
          <FilterSelect id="filter-quantity" label="过滤工程量:" />
          <FilterSelect id="filter-component" label="过滤扣减构件:" />
        </div>
        <div className="h-[308px] shrink-0 flex bg-white border border-[#808591]">
          <table className="table-fixed flex-1 border-separate border-spacing-0 font-['Noto_Sans_CJK_SC',sans-serif]">
            <colgroup><col className="w-[20px]" /><col className="w-[261px]" /><col /></colgroup>
            <thead>
              <tr className="h-[21px]">
                <th className="p-0 bg-[#efefef] border-b border-r border-[#ddd]" />
                <th className="p-0 leading-[19px] bg-[#ffeab0] border-b-2 border-[#34a5cf] text-[13px]">规则描述</th>
                <th className="p-0 leading-5 font-normal border-b border-l border-[#ddd]">规则选项</th>
              </tr>
            </thead>
            <tbody>
              {rules.map(([desc, value, option], i) => (
                <tr key={desc} className="h-[19px]">
                  <td className={`p-0 pt-[2px] text-center leading-4 border-b border-r border-[#dedede] ${i === 0 ? 'bg-[#ffeab0] font-bold' : ''}`}>{i + 1}</td>
                  <td className={`p-0 leading-4 bg-[#f7fab0] ${i === 0 ? 'pt-px border-b-2 border-r-2 border-[#7f7f7f] border-l-2 border-l-[#34a5cf]' : 'pt-[2px] pl-[2px] border-b border-[#e8ebc4]'}`}>{desc}</td>
                  <td className="p-0 pt-[2px] pl-px leading-4 whitespace-pre border-b border-l border-[#dedede]"><span className="inline-block w-[13px]">{value}</span>{option}</td>
                </tr>
              ))}
            </tbody>
          </table>
          <div className="w-[15px] shrink-0 border-l border-[#dedede] flex flex-col items-center justify-between py-2">
            <Caret className="rotate-180" />
            <div className="w-2 h-20 rounded-full bg-[#dadada] -mt-[186px]" />
            <Caret />
          </div>
        </div>
        <div className="mt-1 h-5 shrink-0 bg-white border border-[#a3a5aa] text-center leading-5">相关规则</div>
        <div className="mt-[6px] flex-1 bg-white border border-[#808591] font-['Noto_Sans_CJK_SC',sans-serif]">
          <table className="w-full table-fixed border-separate border-spacing-0">
            <colgroup><col className="w-[282px]" /><col /></colgroup>
            <thead>
              <tr className="h-[21px] leading-5">
                <th className="p-0 font-normal border-b border-r border-[#d9d9d9]">规则描述</th>
                <th className="p-0 font-normal border-b border-[#d9d9d9]">规则选项</th>
              </tr>
            </thead>
          </table>
        </div>
      </div>
    </div>
    <div className="h-[44px] shrink-0 flex gap-[6px] pl-[11px] pt-[7px] relative">
      {['导出规则', '导入规则', '恢复默认值'].map(name => (
        <button key={name} className="w-20 h-[26px] bg-[#f8f9fc] border border-[#b9c0d0] rounded-[3px] text-[#333]">{name}</button>
      ))}
      <svg className="absolute right-[2px] bottom-[2px]" width="9" height="9" fill="#777d85"><path d="M6 0h2v2H6zM3 3h2v2H3zM6 3h2v2H6zM0 6h2v2H0zM3 6h2v2H3zM6 6h2v2H6z" /></svg>
    </div>
    <PenMarks />
  </div>
);

const App: React.FC = () => {
  return (
    <div className="relative h-screen flex flex-col overflow-hidden bg-[#efefef] text-xs text-black font-['Open_Sans','Noto_Sans_CJK_SC',sans-serif]">
      <Header />
      <Ribbon />
      <div className="h-[29px] shrink-0 bg-[#cacbd1] border-b border-[#8f949e] flex items-center gap-[6px] overflow-hidden">
        <BarSelect value="首层" className="w-[92px] -ml-5" />
        <BarSelect value="装修" className="w-[99px]" />
        <BarSelect value="楼地面" className="w-[99px]" />
      </div>
      <div className="flex flex-1 min-h-0">
        <TypePanel />
        <ComponentPanel />
        <Viewport />
        <div className="w-1 shrink-0 bg-[#efefef] pt-[216px]">
          <div className="h-[100px] bg-[#626a78] flex items-center">
            <svg width="4" height="6"><path d="M0 0l3 3-3 3z" fill="#ccc" /></svg>
          </div>
        </div>
        <LayerPanel />
      </div>
      <RulesDialog />
    </div>
  );
};

export default App;
